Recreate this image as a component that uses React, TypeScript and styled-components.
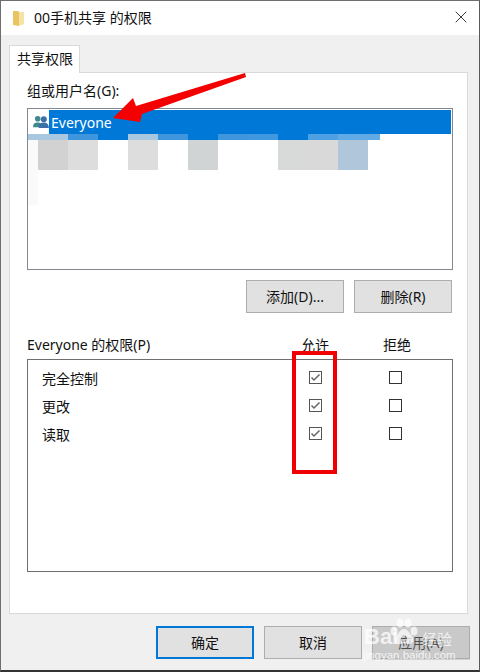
import styled, { createGlobalStyle } from "styled-components";
import { X } from "lucide-react";

const GlobalStyle = createGlobalStyle`
  html, body {
    margin: 0;
    padding: 0;
    background: #f0f0f0;
  }
  body {
    font-family: "Noto Sans", "Noto Sans CJK SC", sans-serif;
    font-size: 14px;
    color: #111;
  }
`;

const Dialog = styled.div`
  position: relative;
  width: 480px;
  height: 672px;
  box-sizing: border-box;
  display: flex;
  flex-direction: column;
  overflow: hidden;
  background: #f0f0f0;
  border-top: 1px solid #6e6e6e;
  border-left: 1px solid #6e6e6e;
  border-right: 1px solid #5a5a5a;
  border-bottom: 2px solid #333;
`;

const TitleBar = styled.header`
  height: 34px;
  flex: none;
  background: #fff;
  display: flex;
  align-items: center;
  padding-left: 11px;
  gap: 7px;
  line-height: 20px;
`;

const TitleText = styled.span`
  flex: 1;
`;

const CloseButton = styled.span`
  width: 36px;
  display: flex;
  justify-content: center;
  margin-bottom: 2px;
  color: #111;
`;

const TabStrip = styled.div`
  flex: none;
  display: flex;
  padding: 10px 0 0 8px;
  height: 37px;
  box-sizing: border-box;
`;

const Tab = styled.div`
  width: 71px;
  height: 28px;
  box-sizing: border-box;
  background: #fff;
  border: 1px solid #d9d9d9;
  border-bottom: none;
  padding-left: 7px;
  line-height: 25px;
  position: relative;
  z-index: 1;
`;

const TabPanel = styled.section`
  width: 459px;
  height: 542px;
  flex: none;
  box-sizing: border-box;
  margin-left: 8px;
  background: #fff;
  border: 1px solid #d9d9d9;
  padding: 8px 15px 0 17px;
`;

const GroupLabel = styled.div`
  line-height: 20px;
  height: 27px;
`;

const ListBox = styled.div`
  width: 426px;
  height: 162px;
  box-sizing: border-box;
  border: 1px solid #828790;
  padding-top: 1px;
  overflow: hidden;
`;

const ListRow = styled.div`
  display: flex;
  height: 24px;
  margin: 0 1px;
`;

const RowIcon = styled.span`
  width: 20px;
  display: flex;
  align-items: center;
  padding-left: 4px;
  box-sizing: border-box;
`;

const SelectedName = styled.span`
  flex: 1;
  background: #0078d7;
  color: #fff;
  padding-left: 2px;
  line-height: 25px;
`;

const BlurStrip = styled.div`
  display: flex;
  height: 6px;
`;

const BlurBlocks = styled.div`
  display: flex;
  height: 30px;
`;

const BlurTile = styled.span<{ $w: number; $c: string }>`
  width: ${(p) => p.$w}px;
  flex: none;
  background: ${(p) => p.$c};
`;

const BlurSide = styled.div`
  width: 10px;
  height: 35px;
  background: #fafafa;
`;

const ButtonRow = styled.div<{ $top: number }>`
  display: flex;
  justify-content: flex-end;
  gap: 10px;
  margin-top: ${(p) => p.$top}px;
`;

const PushButton = styled.button<{ $primary?: boolean }>`
  width: 98px;
  height: 33px;
  box-sizing: border-box;
  padding: 0 0 1px;
  font: inherit;
  color: #111;
  background: #e1e1e1;
  border: ${(p) => (p.$primary ? "2px solid #0078d7" : "1px solid #adadad")};
`;

const PermHeader = styled.div`
  display: grid;
  grid-template-columns: 274px 28px 54px 28px;
  align-items: center;
  margin-top: 21px;
  height: 22px;
  line-height: 20px;
`;

const HeaderCell = styled.span`
  text-align: center;
  white-space: nowrap;
`;

const PermBox = styled.div`
  width: 426px;
  height: 213px;
  margin-top: 3px;
  box-sizing: border-box;
  border: 1px solid #6e6e6e;
  padding: 4px 0 0 14px;
`;

const PermRow = styled.div`
  display: grid;
  grid-template-columns: 259px 28px 52px 28px;
  align-items: center;
  height: 28px;
`;

const CheckCell = styled.span`
  display: flex;
  justify-content: center;
  margin-bottom: 1px;
`;

const CheckBox = styled.span<{ $checked?: boolean }>`
  width: 13px;
  height: 13px;
  box-sizing: border-box;
  display: block;
  background: #fff;
  border: 1px solid ${(p) => (p.$checked ? "#555" : "#333")};
`;

const CheckMark = styled.svg`
  display: block;
`;

const Footer = styled.footer`
  flex: 1;
  padding-right: 9px;
`;

const RedFrame = styled.div`
  position: absolute;
  left: 291px;
  top: 350px;
  width: 45px;
  height: 123px;
  box-sizing: border-box;
  border: 4px solid #f00000;
`;

const Overlay = styled.svg`
  position: absolute;
  left: 0;
  top: 0;
  width: 480px;
  height: 672px;
  pointer-events: none;
`;

const Watermark = styled.div`
  position: absolute;
  left: 371px;
  top: 626px;
  width: 98px;
  height: 33px;
  background: rgba(170, 170, 170, 0.42);
`;

const WatermarkBrand = styled.span`
  position: absolute;
  left: -8px;
  top: 0;
  font-family: "Liberation Sans", sans-serif;
  font-size: 22px;
  line-height: 20px;
  font-weight: 700;
  color: rgba(255, 255, 255, 0.75);
`;

const WatermarkCn = styled.span`
  position: absolute;
  left: 50px;
  top: 3px;
  font-size: 15px;
  line-height: 18px;
  white-space: nowrap;
  color: rgba(255, 255, 255, 0.75);
`;

const WatermarkUrl = styled.span`
  position: absolute;
  left: -9px;
  top: 22px;
  font-family: "Liberation Sans", sans-serif;
  font-size: 11.5px;
  line-height: 13px;
  white-space: nowrap;
  color: rgba(255, 255, 255, 0.8);
`;

const WatermarkPaw = styled.svg`
  position: absolute;
  left: 15px;
  top: -9px;
`;

const stripTiles = [
  [40, "#a8c8e0"], [30, "#4096dc"], [30, "#0078d7"], [30, "#a8c8e0"], [30, "#4096dc"],
  [30, "#0078d7"], [30, "#4096dc"], [30, "#4098e0"], [30, "#0078d7"], [30, "#4ea0e4"], [42, "#60aae6"],
] as const;

const blockTiles = [
  [10, "#fafafa"], [30, "#d2d2d2"], [30, "#dddddd"], [30, "#fff"], [30, "#dddddd"], [30, "#fff"],
  [30, "#d1d4d4"], [60, "#fff"], [30, "#d8dada"], [30, "#d9d9d9"], [30, "#b0c6da"],
] as const;

const permissions = ["完全控制", "更改", "读取"];

const PeopleIcon = () => (
  <svg width="16" height="14" viewBox="0 0 17 15">
    <circle cx="5" cy="4" r="3" fill="#3f8a8c" />
    <path d="M0 13c0-4 2-5 5-5s5 1 5 5z" fill="#3f8a8c" />
    <circle cx="11.5" cy="4.5" r="3.2" fill="#3d6fa8" />
    <path d="M6 14c0-4 2-6 5.5-6s5.5 2 5.5 6z" fill="#3d6fa8" />
  </svg>
);

const TickBox = ({ checked }: { checked?: boolean }) => (
  <CheckCell>
    <CheckBox $checked={checked}>
      {checked && (
        <CheckMark width="11" height="11" viewBox="0 0 11 11">
          <path d="M1.5 5.5l2.5 2.5L9.5 2.5" fill="none" stroke="#666" strokeWidth="1.5" />
        </CheckMark>
      )}
    </CheckBox>
  </CheckCell>
);

const FolderIcon = () => (
  <svg width="15" height="18" viewBox="0 0 15 18">
    <path d="M1 2h5l1 1v14l-6-1z" fill="#e8c463" />
    <path d="M7 3h5v12l-5 2z" fill="#f7e3a6" />
  </svg>
);

export default function App() {
  return (
    <>
      <GlobalStyle />
      <Dialog>
        <TitleBar>
          <FolderIcon />
          <TitleText>00手机共享 的权限</TitleText>
          <CloseButton>
            <X size={20} strokeWidth={1} />
          </CloseButton>
        </TitleBar>
        <TabStrip>
          <Tab>共享权限</Tab>
        </TabStrip>
        <TabPanel>
          <GroupLabel>组或用户名(G):</GroupLabel>
          <ListBox>
            <ListRow>
              <RowIcon>
                <PeopleIcon />
              </RowIcon>
              <SelectedName>Everyone</SelectedName>
            </ListRow>
            <BlurStrip>
              {stripTiles.map(([w, c], i) => (
                <BlurTile key={i} $w={w} $c={c} />
              ))}
            </BlurStrip>
            <BlurBlocks>
              {blockTiles.map(([w, c], i) => (
                <BlurTile key={i} $w={w} $c={c} />
              ))}
            </BlurBlocks>
            <BlurSide />
          </ListBox>
          <ButtonRow $top={10}>
            <PushButton>添加(D)...</PushButton>
            <PushButton>删除(R)</PushButton>
          </ButtonRow>
          <PermHeader>
            <span>Everyone 的权限(P)</span>
            <HeaderCell>允许</HeaderCell>
            <span />
            <HeaderCell>拒绝</HeaderCell>
          </PermHeader>
          <PermBox>
            {permissions.map((name) => (
              <PermRow key={name}>
                <span>{name}</span>
                <TickBox checked />
                <span />
                <TickBox />
              </PermRow>
            ))}
          </PermBox>
        </TabPanel>
        <Footer>
          <ButtonRow $top={12}>
            <PushButton $primary>确定</PushButton>
            <PushButton>取消</PushButton>
            <PushButton>应用(A)</PushButton>
          </ButtonRow>
        </Footer>
        <RedFrame />
        <Overlay viewBox="0 0 480 672">
          <polygon points="112,117 132,97 135,105 244,72 245,76 141,113 139,121" fill="#f40000" />
        </Overlay>
        <Watermark>
          <WatermarkPaw width="34" height="30" viewBox="0 0 34 30" fill="rgba(255,255,255,0.7)">
            <ellipse cx="7" cy="13" rx="3.5" ry="4.5" />
            <ellipse cx="13" cy="5" rx="3.5" ry="4.5" />
            <ellipse cx="21" cy="5" rx="3.5" ry="4.5" />
            <ellipse cx="27" cy="13" rx="3.5" ry="4.5" />
            <path d="M17 11c-4 0-5 4-8 7-3 4-1 9 4 8 3-1 5-1 8 0 5 1 7-4 4-8-3-3-4-7-8-7zM17 17c-2 0-3 2-3 4s1 3 3 3 3-1 3-3-1-4-3-4z" fillRule="evenodd" />
          </WatermarkPaw>
          <WatermarkBrand>Bai</WatermarkBrand>
          <WatermarkCn>经验</WatermarkCn>
          <WatermarkUrl>jingyan.baidu.com</WatermarkUrl>
        </Watermark>
      </Dialog>
    </>
  );
}
